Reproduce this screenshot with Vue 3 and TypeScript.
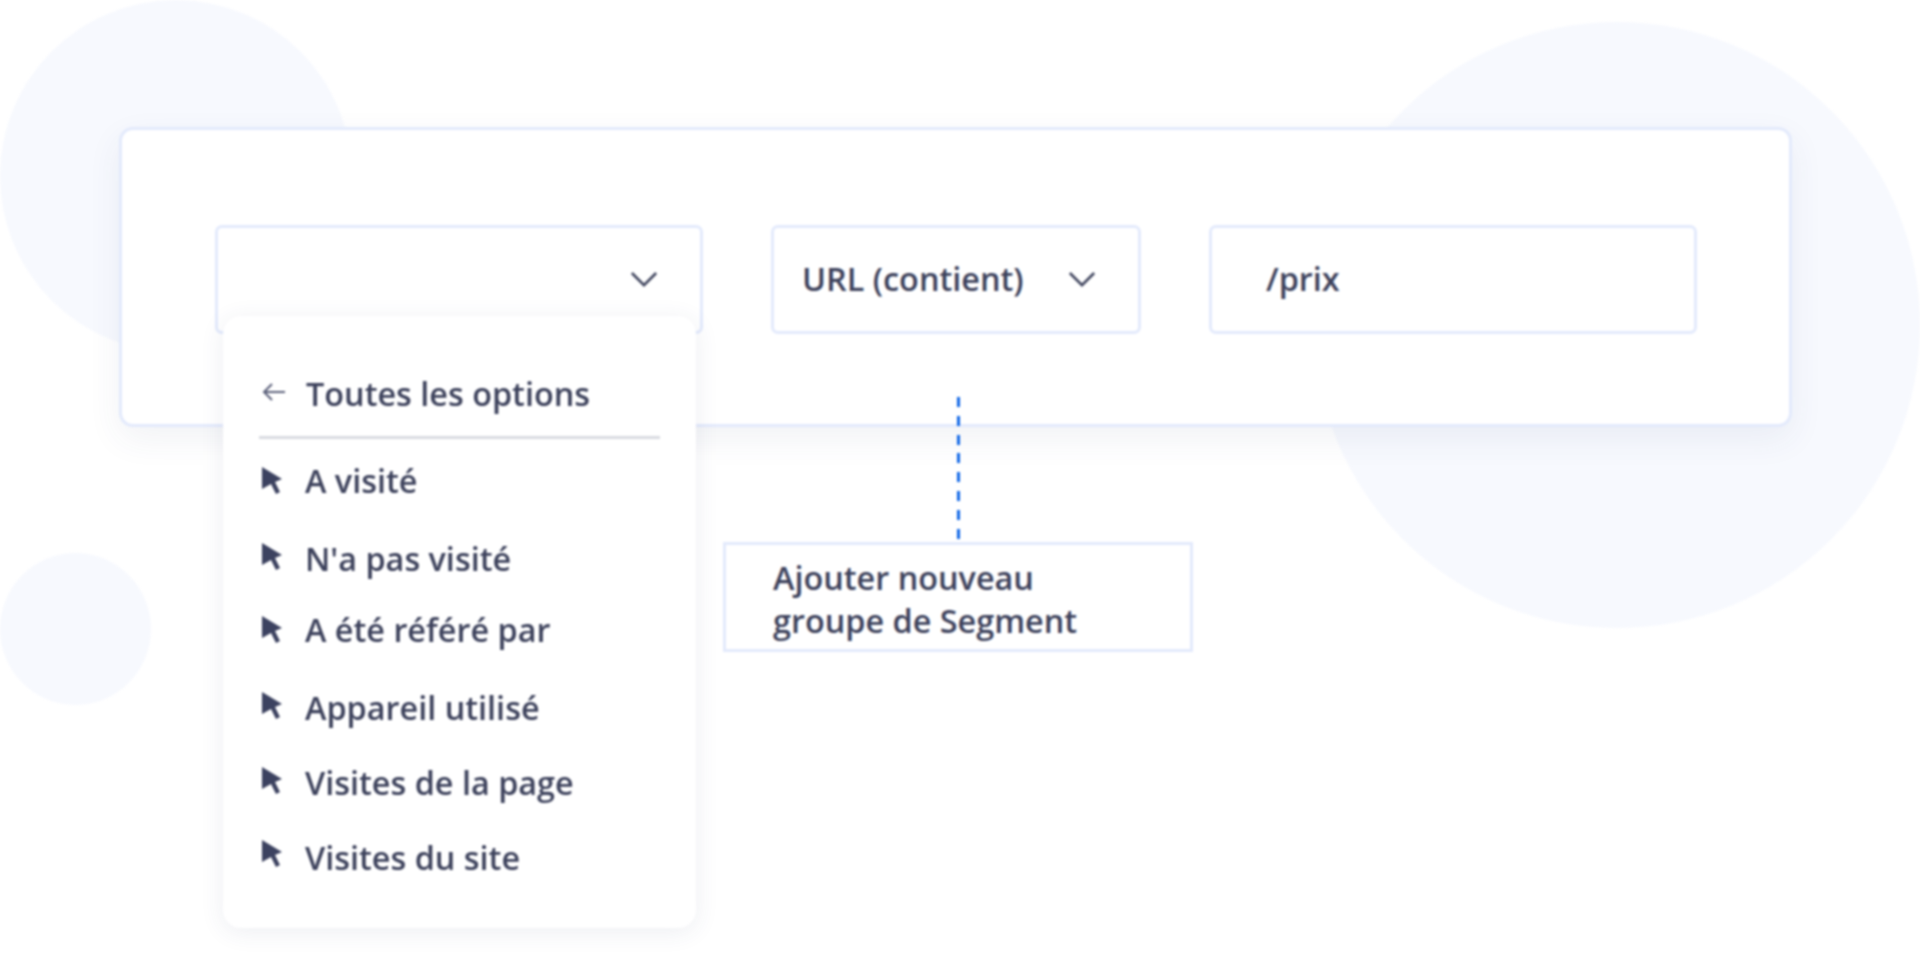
<script setup lang="ts">
interface Option {
  label: string
  iconOffset: number
}

const options: Option[] = [
  { label: 'A visité', iconOffset: 0 },
  { label: "N'a pas visité", iconOffset: -4 },
  { label: 'A été référé par', iconOffset: 0 },
  { label: 'Appareil utilisé', iconOffset: -4 },
  { label: 'Visites de la page', iconOffset: -4 },
  { label: 'Visites du site', iconOffset: -7 },
]
</script>

<template>
  <main class="stage">
    <div class="blob blob-left"></div>
    <div class="blob blob-right"></div>
    <div class="blob blob-small"></div>

    <section class="card">
      <div class="field field-event">
        <svg class="chevron" viewBox="0 0 30 18" aria-hidden="true"><path d="M2 2l13 13L28 2" /></svg>
        <div class="menu">
          <div class="menu-head">
            <svg class="back" viewBox="0 0 24 20" aria-hidden="true"><path d="M23 10H2M10 2l-8 8 8 8" /></svg>
            <span>Toutes les options</span>
          </div>
          <ul class="menu-list">
            <li v-for="option in options" :key="option.label" class="menu-item">
              <svg class="pointer" :style="{ marginTop: option.iconOffset + 'px' }" viewBox="0 0 20 27" aria-hidden="true">
                <path d="M0 0l20 12-7 3 5 10-4 2-5-10-9 5z" />
              </svg>
              <span>{{ option.label }}</span>
            </li>
          </ul>
        </div>
      </div>

      <div class="field field-match">
        <span>URL (contient)</span>
        <svg class="chevron" viewBox="0 0 30 18" aria-hidden="true"><path d="M2 2l13 13L28 2" /></svg>
      </div>

      <div class="field field-value">
        <span>/prix</span>
      </div>
    </section>

    <div class="branch">
      <div class="connector"></div>
      <div class="add-group">Ajouter nouveau<br />groupe de Segment</div>
    </div>
  </main>
</template>

<style>
html,
body {
  margin: 0;
  background: #ffffff;
}
</style>

<style scoped>
.stage {
  position: relative;
  box-sizing: border-box;
  width: 1920px;
  height: 956px;
  padding: 127px 128px 0 119px;
  overflow: hidden;
  font-family: "Open Sans", "Liberation Sans", sans-serif;
  font-size: 32.4px;
  font-weight: 600;
  color: #3d425c;
  filter: blur(1.2px);
}

.blob {
  position: absolute;
  border-radius: 50%;
  background: #f7f9fe;
}

.blob-left {
  left: 0;
  top: 0;
  width: 352px;
  height: 352px;
}

.blob-right {
  left: 1314px;
  top: 22px;
  width: 606px;
  height: 606px;
}

.blob-small {
  left: 0;
  top: 553px;
  width: 151px;
  height: 152px;
}

.card {
  position: relative;
  box-sizing: border-box;
  display: flex;
  gap: 68px;
  height: 300px;
  padding: 95px 90px 0 93px;
  background: #ffffff;
  border: 3px solid #e3eafc;
  border-radius: 14px;
  box-shadow: 0 12px 34px rgba(60, 70, 110, 0.07);
}

.field {
  position: relative;
  box-sizing: border-box;
  display: flex;
  align-items: center;
  height: 109px;
  background: #ffffff;
  border: 3px solid #e3eafc;
  border-radius: 7px;
}

.field-event {
  flex: none;
  width: 488px;
  justify-content: flex-end;
  padding-right: 42px;
}

.field-match {
  flex: none;
  width: 370px;
  justify-content: space-between;
  padding: 0 42px 0 28px;
}

.field-match span {
  margin-top: -4px;
}

.field-value {
  flex: none;
  width: 488px;
  padding: 0 0 4px 54px;
}

.chevron {
  width: 28px;
  height: 17px;
  fill: none;
  stroke: #41465f;
  stroke-width: 2.8;
}

.menu {
  position: absolute;
  left: 5px;
  top: 88px;
  box-sizing: border-box;
  width: 473px;
  height: 612px;
  padding: 54px 36px 0 36px;
  background: #ffffff;
  border-radius: 18px;
  box-shadow: 0 4px 24px rgba(60, 70, 110, 0.09);
}

.menu-head {
  box-sizing: border-box;
  display: flex;
  align-items: center;
  gap: 20px;
  height: 69px;
  padding-bottom: 20px;
  border-bottom: 3px solid #d9dbe1;
}

.back {
  width: 24px;
  height: 20px;
  margin: -3px 0 0 3px;
  fill: none;
  stroke: #5b607a;
  stroke-width: 2;
}

.menu-list {
  margin: 0;
  padding: 11px 0 0 3px;
  list-style: none;
}

.menu-item {
  display: flex;
  align-items: center;
  gap: 23px;
  height: 60px;
}

.menu-item:nth-child(2),
.menu-item:nth-child(4) {
  margin-top: 18px;
}

.menu-item:nth-child(3) {
  margin-top: 11px;
}

.menu-item:nth-child(n + 5) {
  margin-top: 15px;
}

.pointer {
  flex: none;
  width: 20px;
  height: 27px;
  fill: #3c4260;
}

.branch {
  position: relative;
  display: flex;
  flex-direction: column;
  align-items: center;
  width: 470px;
  margin: -30px 0 0 604px;
}

.connector {
  width: 3px;
  height: 142px;
  margin-bottom: 3px;
  background: repeating-linear-gradient(to bottom, #0f66e6 0 10px, transparent 10px 18.8px);
}

.add-group {
  box-sizing: border-box;
  width: 470px;
  height: 110px;
  padding: 11px 0 0 47px;
  line-height: 43px;
  background: #ffffff;
  border: 3px solid #e3eafc;
}
</style>
